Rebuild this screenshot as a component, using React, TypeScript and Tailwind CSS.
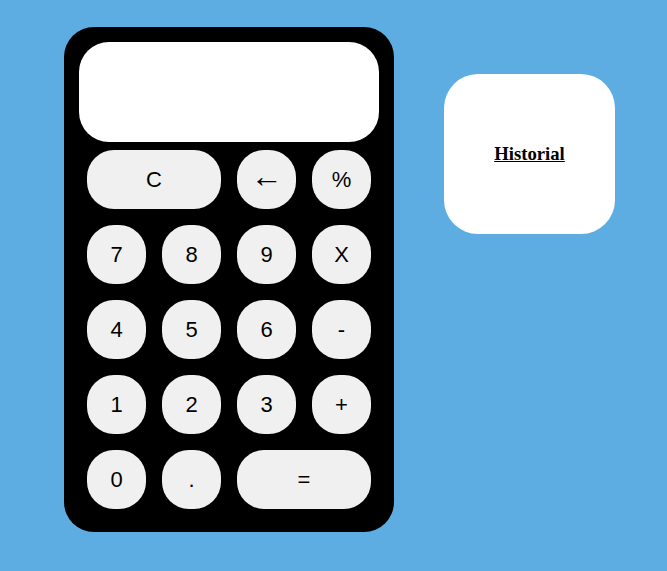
import React from "react";

const Btn = ({ label, wide, cls }: { label: string; wide?: boolean; cls?: string }) => (
  <button
    className={
      (wide ? "col-span-2 " : "") +
      "h-[59px] rounded-[27px] bg-[#f0f0f0] text-black flex items-center justify-center " +
      (cls ?? "text-[22px]")
    }
    style={{ fontFamily: '"Liberation Sans", Arial, sans-serif' }}
  >
    {label}
  </button>
);

export default function App() {
  return (
    <div className="w-[667px] h-[571px] bg-[#5dade2] flex items-start pl-[64px] pt-[27px] gap-[50px] overflow-hidden">
      <div className="w-[330px] bg-black rounded-[30px] pt-[15px] pb-[23px] flex flex-col">
        <div className="mx-[15px] h-[100px] bg-white rounded-[30px]" />
        <div className="mt-[8px] mx-[23px] grid grid-cols-[repeat(4,59px)] gap-[16px]">
          <Btn label="C" wide />
          <Btn label="←" cls="text-[32px] leading-none text-[#333] pb-[7px]" />
          <Btn label="%" />
          <Btn label="7" />
          <Btn label="8" />
          <Btn label="9" />
          <Btn label="X" />
          <Btn label="4" />
          <Btn label="5" />
          <Btn label="6" />
          <Btn label="-" />
          <Btn label="1" />
          <Btn label="2" />
          <Btn label="3" />
          <Btn label="+" />
          <Btn label="0" />
          <Btn label="." />
          <Btn label="=" wide />
        </div>
      </div>
      <div className="mt-[47px] w-[171px] h-[160px] bg-white rounded-[34px] flex items-center justify-center">
        <span
          className="text-[18.72px] font-bold underline text-black"
          style={{ fontFamily: '"Liberation Serif", "Times New Roman", serif' }}
        >
          Historial
        </span>
      </div>
    </div>
  );
}
